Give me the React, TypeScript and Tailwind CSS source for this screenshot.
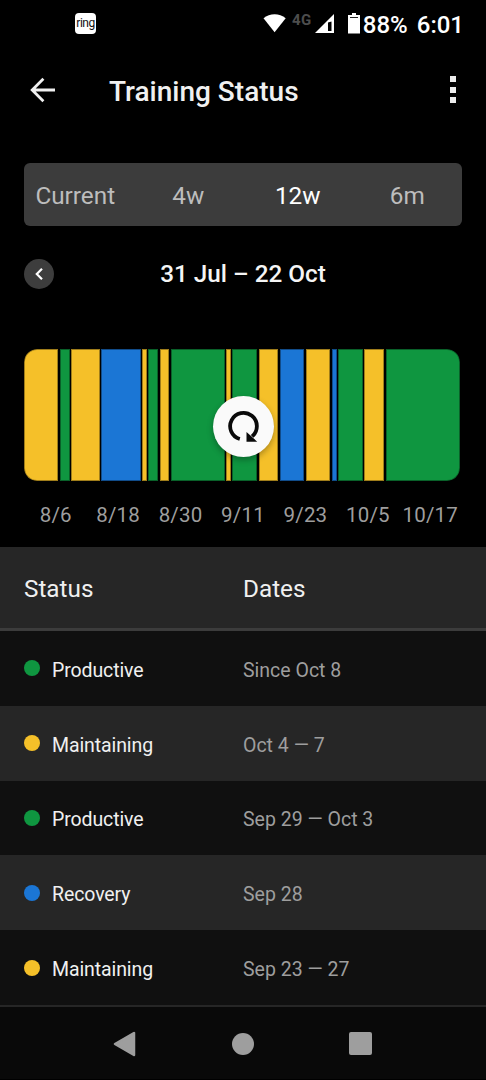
type Status = 'Productive' | 'Maintaining' | 'Recovery';

const statusColor: Record<Status, string> = {
  Productive: 'bg-[#0f9640]',
  Maintaining: 'bg-[#f5c029]',
  Recovery: 'bg-[#1b76d5]',
};

interface Segment {
  status: Status;
  start: number;
  end: number;
}

// positions along the 436 wide timeline
const CHART_WIDTH = 436;
const segments: Segment[] = [
  { status: 'Maintaining', start: 0, end: 34 },
  { status: 'Productive', start: 36, end: 46 },
  { status: 'Maintaining', start: 47, end: 76 },
  { status: 'Recovery', start: 77, end: 117 },
  { status: 'Maintaining', start: 118, end: 123 },
  { status: 'Productive', start: 124, end: 134 },
  { status: 'Maintaining', start: 136, end: 145 },
  { status: 'Productive', start: 147, end: 201 },
  { status: 'Maintaining', start: 202, end: 207 },
  { status: 'Productive', start: 208, end: 233 },
  { status: 'Maintaining', start: 235, end: 254 },
  { status: 'Recovery', start: 256, end: 280 },
  { status: 'Maintaining', start: 282, end: 306 },
  { status: 'Recovery', start: 308, end: 313 },
  { status: 'Productive', start: 314, end: 339 },
  { status: 'Maintaining', start: 340, end: 360 },
  { status: 'Productive', start: 362, end: 436 },
];

const ranges = [
  { label: 'Current', className: 'pr-[7px] text-[#bdbdbd]' },
  { label: '4w', className: 'text-[#bdbdbd]' },
  { label: '12w', className: 'text-white' },
  { label: '6m', className: 'text-[#bdbdbd]' },
];

const axisLabels = ['8/6', '8/18', '8/30', '9/11', '9/23', '10/5', '10/17'];

const rows: { status: Status; dates: string }[] = [
  { status: 'Productive', dates: 'Since Oct 8' },
  { status: 'Maintaining', dates: 'Oct 4 — 7' },
  { status: 'Productive', dates: 'Sep 29 — Oct 3' },
  { status: 'Recovery', dates: 'Sep 28' },
  { status: 'Maintaining', dates: 'Sep 23 — 27' },
];

function StatusBar() {
  return (
    <div className="flex h-12 items-center pl-[75px] pr-[22px] text-white">
      <div className="mt-[-1px] flex h-[21px] w-[21px] items-center justify-center rounded-[4px] bg-white text-[12px] leading-none tracking-[-0.500px] text-[#111]">
        <span className="mt-[-2px]">ring</span>
      </div>
      <svg className="mt-[-2px] ml-auto h-[20px] w-[23px]" viewBox="0 0 23 20">
        <path d="M0.5 5.3C6.8-.2 16.4-.2 22.7 5.3L11.6 19.3Z" fill="#fff" />
      </svg>
      <span className="mt-[-7px] ml-[6px] text-[15px] font-bold tracking-[0.500px] text-[#4d4d4d]">4G</span>
      <svg className="mt-[-1px] ml-[3px] h-[19px] w-[19px]" viewBox="0 0 19 19">
        <path fillRule="evenodd" d="M0 19L19 0V19ZM13 8.500V17H16.500V7.500Z" fill="#fff" />
      </svg>
      <svg className="mt-[-1px] ml-[14px] h-[21px] w-[12px]" viewBox="0 0 12 21">
        <path d="M4 0H8V2H12V20.500H0V2H4Z" fill="#fff" />
        <path d="M2 4.500H10" stroke="#222" strokeWidth="1" />
      </svg>
      <span className="ml-[3px] mt-[1px] text-[24px] font-medium">88%</span>
      <span className="ml-[9px] mt-[1px] text-[24px] font-medium">6:01</span>
    </div>
  );
}

function AppBar() {
  return (
    <header className="flex h-[86px] items-center pl-[30px] pr-[30px] text-[#f0f0f0]">
      <svg className="mt-[-3px] h-[26px] w-[26px]" viewBox="0 0 26 26" fill="none" stroke="#f0f0f0" strokeWidth="2.800">
        <path d="M25 13H3M13.400 1.800L2.200 13L13.400 24.200" />
      </svg>
      <h1 className="mt-[1px] ml-[53px] text-[28px] leading-[32px] font-medium">Training Status</h1>
      <div className="mt-[-3px] ml-auto flex flex-col gap-[4.500px]">
        <span className="h-[6px] w-[6px] bg-[#ececec]" />
        <span className="h-[6px] w-[6px] bg-[#ececec]" />
        <span className="h-[6px] w-[6px] bg-[#ececec]" />
      </div>
    </header>
  );
}

function Timeline() {
  return (
    <div className="relative mx-6 mt-[60px] h-[132px] w-[436px]">
      <div className="flex h-full overflow-hidden rounded-[13px]">
        {segments.map((s, i) => {
          const next = segments[i + 1]?.start ?? CHART_WIDTH;
          return (
            <div
              key={s.start}
              className={`shrink-0 border border-black/35 bg-clip-border first:rounded-l-[13px] last:rounded-r-[13px] ${statusColor[s.status]}`}
              style={{ width: s.end - s.start, marginRight: next - s.end }}
            />
          );
        })}
      </div>
      {/* Rotate button */}
      <button className="absolute top-[47px] left-[188.500px] h-[61px] w-[61px] rounded-full bg-[#fafafa] shadow-[0_3px_6px_rgba(0,0,0,0.3)]">
        <svg className="h-[61px] w-[61px]" viewBox="0 0 61 61">
          <path d="M26.800 43A13.350 13.350 0 1 1 39.100 40.400" fill="none" stroke="#0a0a0a" strokeWidth="3.800" />
          <path d="M33.500 36V45.700H44.200Z" fill="#0a0a0a" />
        </svg>
      </button>
    </div>
  );
}

function NavBar() {
  return (
    <nav className="flex h-[73px] items-center border-b border-black bg-[#090909] pt-[2px]">
      <svg className="ml-[113px] h-[26px] w-[23px]" viewBox="0 0 23 26">
        <path d="M2 13L21 2V24Z" fill="#9e9e9e" stroke="#9e9e9e" strokeWidth="2.500" strokeLinejoin="round" />
      </svg>
      <span className="ml-[96px] h-[22px] w-[22px] rounded-full bg-[#9e9e9e]" />
      <span className="ml-[94.500px] h-[23px] w-[23px] rounded-[2px] bg-[#9e9e9e]" />
    </nav>
  );
}

export default function App() {
  return (
    <div className="h-[1080px] w-[486px] overflow-hidden bg-black font-['Roboto',sans-serif]">
      <StatusBar />
      <AppBar />

      <div className="mx-6 mt-[29px] grid h-[63px] w-[438px] grid-cols-4 items-center rounded-[6px] bg-[#3c3c3c] text-center text-[24.300px]">
        {ranges.map((r) => (
          <span key={r.label} className={`mt-[4px] ${r.className}`}>
            {r.label}
          </span>
        ))}
      </div>

      <div className="mx-6 mt-[32px] flex h-[31px] items-center">
        <button className="flex h-[30px] w-[30px] items-center justify-center rounded-full bg-[#3d3d3d]">
          <svg className="h-[12px] w-[8px]" viewBox="0 0 8 12" fill="none" stroke="#fff" strokeWidth="2.200">
            <path d="M7 0.800L1.800 6L7 11.200" />
          </svg>
        </button>
        <h2 className="mt-[2px] mr-[30px] flex-1 text-center text-[24.300px] font-medium text-[#f5f5f5]">31 Jul – 22 Oct</h2>
      </div>

      <Timeline />
      <div className="ml-[24.500px] grid h-[66px] w-[437px] grid-cols-7 items-center pt-[2px] text-center text-[20.500px] text-[#9e9e9e]">
        {axisLabels.map((label) => (
          <span key={label} className="tracking-[0.200px]">{label}</span>
        ))}
      </div>

      {/* Status history */}
      <div className="grid h-[84px] grid-cols-2 items-center border-b-[3px] border-[#3c3c3c] bg-[#262626] pt-[4px] text-[24.300px] text-[#f0f0f0]">
        <span className="pl-6">Status</span>
        <span>Dates</span>
      </div>
      {rows.map((row) => (
        <div key={row.dates} className="grid h-[74.800px] grid-cols-2 items-center text-[19.500px] odd:bg-[#262626] even:bg-[#101010]">
          <div className="flex items-center pl-6">
            <span className={`mr-3 h-4 w-4 rounded-full ${statusColor[row.status]}`} />
            <span className="mt-[4px] tracking-[-0.100px] text-[#f0f0f0]">{row.status}</span>
          </div>
          <span className="mt-[4px] text-[#9e9e9e]">{row.dates}</span>
        </div>
      ))}
      <div className="h-[2px] bg-[#262626]" />
      <NavBar />
    </div>
  );
}
